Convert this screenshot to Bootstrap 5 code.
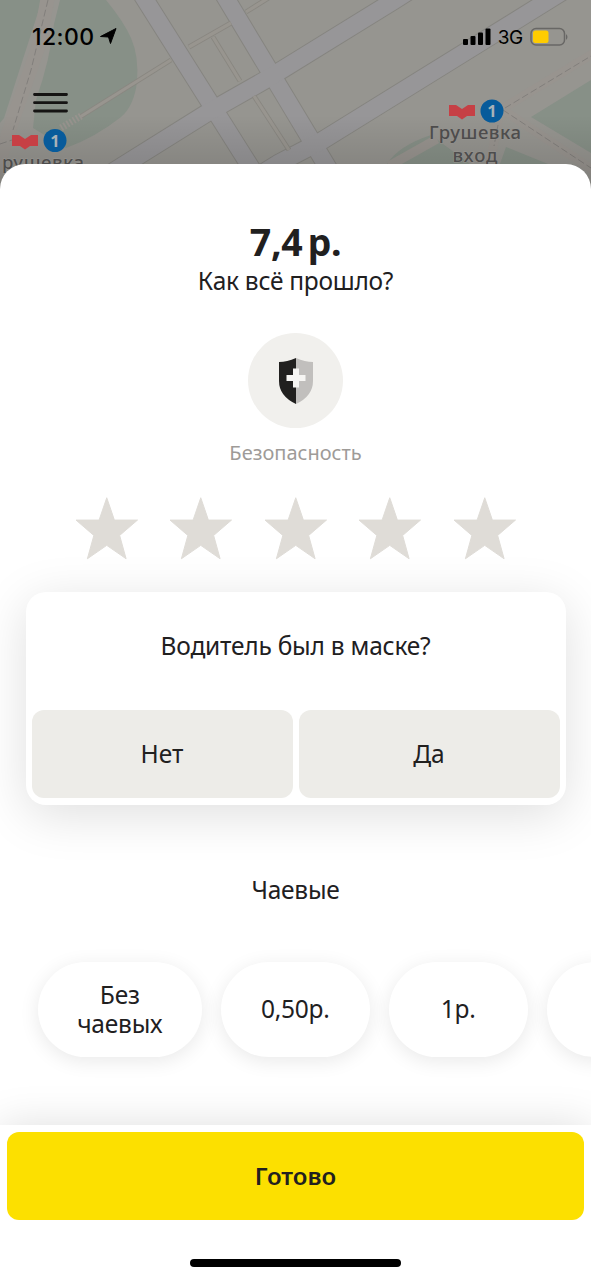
<!DOCTYPE html>
<html lang="ru">
<head>
<meta charset="utf-8">
<meta name="viewport" content="width=device-width, initial-scale=1">
<title>Оценка поездки</title>
<link href="https://cdn.jsdelivr.net/npm/bootstrap@5.3.0/dist/css/bootstrap.min.css" rel="stylesheet">
<style>
body{font-family:"Noto Sans",sans-serif;color:#21201f;background:#fff;font-size:24.5px;line-height:29px;letter-spacing:-.22px}
.screen{width:591px;height:1280px}
.map-area{height:164px}
.map-art{top:0;left:0;z-index:0}
.status-bar{font-family:Inter,sans-serif;color:#000;padding:22px 22px 0 32px;height:52px}
.clock{font-size:23px;font-weight:500;letter-spacing:.4px;padding-top:1px}
.network{font-size:19px;font-weight:400;letter-spacing:-.3px;padding-top:1px}
.menu-btn{margin:39px 0 0 32px;line-height:0}
.sheet{height:961px;border-radius:25px 25px 0 0;z-index:1}
.price{font-size:37.5px;font-weight:700;line-height:40px;padding-top:58px;word-spacing:-4px;letter-spacing:-.4px}
.how{margin-top:4px;letter-spacing:-.27px}
.safety{width:95px;height:95px;background:#f1f0ed;margin-top:38px}
.safety-label{font-size:20px;color:#9e9b98;margin-top:10px;letter-spacing:0}
.stars{gap:31px;margin-top:29px;height:64px}
.question{width:540px;height:213px;margin-top:32px;border-radius:20px;box-shadow:0 10px 50px rgba(0,0,0,.13);padding:6px}
.question-title{height:112px;padding-bottom:17px}
.answers{gap:6px}
.answer,.answer:hover{background:#edece8;border:0;border-radius:12px;height:88px;font-size:24.5px;color:#21201f}
.tips-title{margin-top:70px}
.tips{gap:19px;margin-top:58px;padding-left:38px;height:95px}
.tip{border-radius:48px;height:95px;padding-bottom:2px;box-shadow:0 4px 20px rgba(0,0,0,.09)}
.bottom{height:155px;z-index:2;box-shadow:0 0 40px rgba(0,0,0,.13);padding:7px 7px 0}
.done,.done:hover{height:88px;background:#fce000;border:0;border-radius:12px;font-size:24px;font-weight:600;color:#21201f;letter-spacing:0}
.home-bar{width:211px;height:8px;margin-top:39px}
</style>
</head>
<body>
<main class="screen position-relative overflow-hidden mx-auto">
  <svg class="map-art position-absolute" width="591" height="210" viewBox="0 0 591 210">
    <defs><linearGradient id="shade" x1="0" y1="0" x2="0" y2="1"><stop offset="0" stop-color="#000" stop-opacity="0"/><stop offset="1" stop-color="#000" stop-opacity=".2"/></linearGradient></defs>
    <rect width="591" height="210" fill="#969590"/>
    <!-- parks -->
    <path d="M0 0H42L22 62L4 118L0 123ZM60 0H106Q124 22 131 38Q139 56 137 82Q134 106 121 117Q96 137 66 148L33 128L36 100Q50 60 54 24Z" fill="#879087"/>
    <path d="M531 117L591 80V153ZM387 164Q398 146 431 135L470 164ZM506 147L548 164H500Z" fill="#879087"/>
    <path d="M48 -4L39 45L12 122L-6 178" fill="none" stroke="#98948f" stroke-width="14"/>
    <path d="M503 110L602 176M497 112L602 48M498 120L490 164M389 166L437 139" fill="none" stroke="#98948f" stroke-width="9"/>
    <!-- streets -->
    <g fill="none" stroke="#868580" stroke-linecap="butt">
      <path d="M139 -10L248 163L270 198M221 -10L325 163L345 196" stroke-width="19"/>
      <path d="M70 199L127 163L207 113L267 79L395 0L420 -16M240 187L279 163L323 140L549 0L565 -10" stroke-width="19"/>
    </g>
    <g fill="none" stroke="#979698">
      <path d="M139 -10L248 163L270 198M221 -10L325 163L345 196" stroke-width="17"/>
      <path d="M70 199L127 163L207 113L267 79L395 0L420 -16M240 187L279 163L323 140L549 0L565 -10" stroke-width="17"/>
    </g>
    <g fill="none" stroke="#898781" stroke-width="5"><path d="M80 117L171 60M189 47L231 23M246 12L270 -3M213 37L240 81M254 96L289 150"/></g>
    <g fill="none" stroke="#98958f" stroke-width="3.2"><path d="M80 117L171 60M189 47L231 23M246 12L270 -3M213 37L240 81M254 96L289 150"/></g>
    <path d="M61 128L81 116" stroke="#98948f" stroke-width="7" stroke-dasharray="1.8 1.8"/>
    <g fill="none" stroke="#827f7c" stroke-width="1"><path d="M48 0L31 70L13 130M505 108L591 56M503 110L591 168M498 125L494 146M0 144L12 140" stroke-dasharray="7 3"/></g>
    <rect y="115" width="591" height="95" fill="url(#shade)"/>
    <!-- metro markers -->
    <g fill="#c64045"><path d="M12 135H19L25 139L31 135H38V146H30L25 149.500L20 146H12Z"/><path d="M449 105H456L462 109L468 105H475V116H467L462 119.500L457 116H449Z"/></g>
    <circle cx="55" cy="140.500" r="11.500" fill="#075b9b"/><circle cx="492" cy="111" r="11.500" fill="#075b9b"/>
    <g font-family="Noto Sans, sans-serif" text-anchor="middle" letter-spacing="0">
      <g font-size="16.5" font-weight="700" fill="#a7b2b8"><text x="55" y="146.500">1</text><text x="492" y="117">1</text></g>
      <g font-size="18.5" font-weight="500" fill="#4d4c4c" stroke="#96938f" stroke-width="1" paint-order="stroke"><text x="43" y="168.500" textLength="82">рушевка</text><text x="475" y="139" textLength="92">Грушевка</text><text x="475" y="162" textLength="45">вход</text></g>
    </g>
  </svg>
  <header class="map-area position-relative">
    <div class="status-bar d-flex align-items-start">
      <span class="clock">12:00</span>
      <svg class="mt-1" style="margin-left:5px" width="20" height="20" viewBox="0 0 20 20"><path d="M1.500 10.500L17 2.500L11.500 17.500L9.500 11Z" fill="#000" stroke="#000" stroke-linejoin="round"/></svg>
      <svg class="ms-auto" width="28" height="28" viewBox="0 0 28 28"><g><rect x="0" y="17" width="5" height="6" rx="1"/><rect x="7.500" y="14" width="5" height="9" rx="1"/><rect x="15" y="10.500" width="5" height="12.500" rx="1"/><rect x="22.500" y="6.500" width="5" height="16.500" rx="1"/></g></svg>
      <span class="network" style="margin-left:7px">3G</span>
      <svg style="margin-left:7px" width="39" height="29" viewBox="0 0 39 29"><rect x="1" y="6.500" width="33.500" height="16.500" rx="5" fill="none" stroke="#686765" stroke-width="1.500"/><rect x="3" y="8.500" width="15.500" height="12.500" rx="2.500" fill="#ffcc00"/><path d="M36 12Q39 15 36 18Z" fill="#686765"/></svg>
    </div>
    <div class="menu-btn"><svg width="36" height="24" viewBox="0 0 36 24"><path d="M2.500 3.500H34.500M2.500 11.700H34.500M2.500 20H34.500" stroke="#151413" stroke-width="2.800" stroke-linecap="round"/></svg></div>
  </header>

  <section class="sheet bg-white position-relative overflow-hidden d-flex flex-column align-items-center text-center">
    <h1 class="price m-0">7,4 р.</h1>
    <div class="how">Как всё прошло?</div>
    <div class="safety rounded-circle d-flex align-items-center justify-content-center flex-shrink-0">
      <svg width="36" height="48" viewBox="0 0 36 48"><path d="M18 1Q9 5 1 5V24Q1 39 18 47Z" fill="#21201f"/><path d="M18 1Q27 5 35 5V24Q35 39 18 47Z" fill="#c1bfbd"/><path d="M15 11.500H21V18H27.500V24H21V30.500H15V24H8.500V18H15Z" fill="#f6f5f3"/></svg>
    </div>
    <div class="safety-label">Безопасность</div>
    <div class="stars d-flex" id="stars"></div>
    <div class="question bg-white flex-shrink-0">
      <div class="question-title d-flex align-items-center justify-content-center"><span>Водитель был в маске?</span></div>
      <div class="d-flex answers">
        <button class="answer btn flex-fill w-50">Нет</button>
        <button class="answer btn flex-fill w-50">Да</button>
      </div>
    </div>
    <div class="tips-title">Чаевые</div>
    <div class="tips d-flex align-self-stretch">
      <div class="tip bg-white d-flex align-items-center justify-content-center flex-shrink-0" style="width:163.500px">Без<br>чаевых</div>
      <div class="tip bg-white d-flex align-items-center justify-content-center flex-shrink-0" style="width:149.500px">0,50р.</div>
      <div class="tip bg-white d-flex align-items-center justify-content-center flex-shrink-0" style="width:138.500px">1р.</div>
      <div class="tip bg-white flex-shrink-0" style="width:138.500px"></div>
    </div>
  </section>

  <footer class="bottom bg-white position-relative">
    <button class="done btn w-100 d-block">Готово</button>
    <div class="home-bar bg-black rounded-pill mx-auto"></div>
  </footer>
</main>
<script>
document.getElementById('stars').innerHTML = Array(5).fill('<svg width="63.500" height="64" viewBox="0 0 64 64"><path d="M32 1.500L39.700 24H63L45 39.500L51.500 63L32 49.500L12.500 63L19 39.500L1 24H24.300Z" fill="#dfdcd7" stroke="#dfdcd7" stroke-linejoin="round"/></svg>').join('');
</script>
<script src="https://cdn.jsdelivr.net/npm/bootstrap@5.3.0/dist/js/bootstrap.bundle.min.js"></script>
</body>
</html>
